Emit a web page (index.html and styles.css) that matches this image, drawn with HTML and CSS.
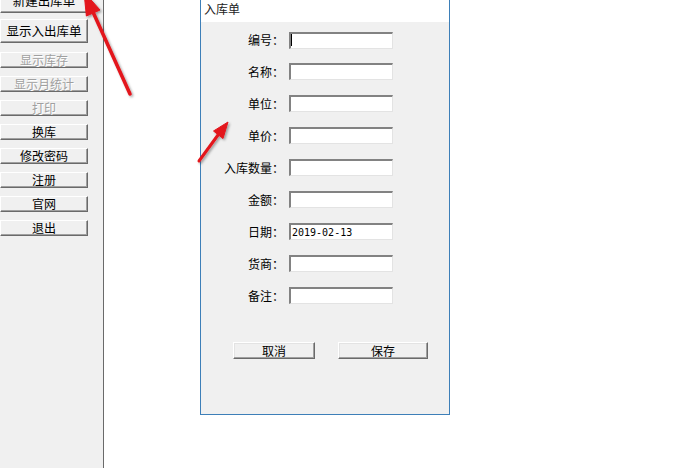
FILE: index.html
```html
<!DOCTYPE html>
<html lang="zh-CN">
<head>
    <meta charset="UTF-8">
    <title>入库单</title>
    <link rel="stylesheet" href="styles.css">
</head>
<body>
    <div class="page">
        <!-- 左侧菜单 -->
        <div class="sidebar">
            <button class="side-btn big first">新建出库单</button>
            <button class="side-btn big second">显示入出库单</button>
            <button class="side-btn" disabled>显示库存</button>
            <button class="side-btn" disabled>显示月统计</button>
            <button class="side-btn" disabled>打印</button>
            <button class="side-btn">换库</button>
            <button class="side-btn">修改密码</button>
            <button class="side-btn">注册</button>
            <button class="side-btn">官网</button>
            <button class="side-btn">退出</button>
        </div>

        <div class="main">
            <!-- 入库单窗口 -->
            <div class="dialog">
                <div class="dialog-title">入库单</div>
                <div class="dialog-body">
                    <div class="row">
                        <label class="row-label">编号：</label>
                        <span class="field-wrap">
                            <input class="field" type="text">
                            <span class="caret"></span>
                        </span>
                    </div>
                    <div class="row">
                        <label class="row-label">名称：</label>
                        <input class="field" type="text">
                    </div>
                    <div class="row">
                        <label class="row-label">单位：</label>
                        <input class="field" type="text">
                    </div>
                    <div class="row">
                        <label class="row-label">单价：</label>
                        <input class="field" type="text">
                    </div>
                    <div class="row">
                        <label class="row-label">入库数量：</label>
                        <input class="field" type="text">
                    </div>
                    <div class="row">
                        <label class="row-label">金额：</label>
                        <input class="field" type="text">
                    </div>
                    <div class="row">
                        <label class="row-label">日期：</label>
                        <input class="field date" type="text" value="2019-02-13">
                    </div>
                    <div class="row">
                        <label class="row-label">货商：</label>
                        <input class="field" type="text">
                    </div>
                    <div class="row">
                        <label class="row-label">备注：</label>
                        <input class="field" type="text">
                    </div>

                    <div class="actions">
                        <button class="act-btn cancel">取消</button>
                        <button class="act-btn save">保存</button>
                    </div>
                </div>
            </div>
        </div>

        <!-- 标注箭头 -->
        <svg class="arrows" width="688" height="468" viewBox="0 0 688 468">
            <defs>
                <filter id="shade" x="-20%" y="-20%" width="140%" height="140%">
                    <feDropShadow dx="1.5" dy="1.5" stdDeviation="1.2" flood-color="#000" flood-opacity="0.35"/>
                </filter>
            </defs>
            <g fill="#e3141b" stroke="#e3141b" filter="url(#shade)">
                <line x1="130" y1="94" x2="93" y2="12" stroke-width="3.5" stroke-linecap="round"/>
                <polygon points="84,-8 86.4,16 100,10" stroke-width="1" stroke-linejoin="round"/>
                <line x1="199" y1="161" x2="218" y2="135" stroke-width="3" stroke-linecap="round"/>
                <polygon points="228,122 213.5,131 223,138.5" stroke-width="1" stroke-linejoin="round"/>
            </g>
        </svg>
    </div>
</body>
</html>
```

FILE: styles.css
```css
body {
    margin: 0;
    padding: 0;
    background-color: #ffffff;
    font-family: "Noto Sans CJK SC", "Liberation Sans", sans-serif;
    font-size: 12px;
    color: #000;
}
.page {
    position: relative;
    display: flex;
    width: 688px;
    height: 468px;
    overflow: hidden;
}
.sidebar {
    width: 103px;
    flex-shrink: 0;
    background-color: #f0f0f0;
    border-right: 1px solid #6a6a6a;
    display: flex;
    flex-direction: column;
    gap: 8px;
}
.side-btn {
    width: 88px;
    height: 16px;
    padding: 0;
    margin: 0;
    background-color: #f0f0f0;
    border: 1px solid;
    border-color: #ffffff #6a6a6a #6a6a6a #ffffff;
    box-shadow: inset -1px -1px 0 #a0a0a0;
    font-family: "Noto Sans CJK SC", sans-serif;
    font-size: 12px;
    line-height: 14px;
    color: #000;
    text-align: center;
}
.side-btn.big {
    height: 24px;
    font-size: 12.5px;
}
.side-btn.first {
    margin-top: -11px;
    margin-bottom: -2px;
}
.side-btn.second {
    margin-bottom: 1px;
}
.side-btn:disabled {
    color: #a0a0a0;
    text-shadow: 1px 1px 0 #ffffff;
}
.main {
    flex: 1;
    padding-left: 96px;
}
.dialog {
    width: 248px;
    height: 414px;
    border: 1px solid #3d7fb8;
    border-top: none;
    background-color: #f0f0f0;
}
.dialog-title {
    height: 22px;
    background-color: #ffffff;
    padding-left: 3px;
    line-height: 18px;
    color: #222;
}
.dialog-body {
    padding-top: 9px;
    display: flex;
    flex-direction: column;
    gap: 15px;
}
.row {
    display: flex;
    align-items: center;
    height: 17px;
}
.row-label {
    width: 83px;
    text-align: right;
    margin-right: 5px;
    line-height: 17px;
}
.field-wrap {
    position: relative;
    display: block;
    height: 17px;
}
.field {
    box-sizing: border-box;
    width: 104px;
    height: 17px;
    margin: 0;
    padding: 0 0 0 1px;
    border-style: solid;
    border-width: 2px 1px 1px 2px;
    border-color: #828282 #e3e3e3 #e3e3e3 #828282;
    background-color: #ffffff;
    outline: none;
}
.field.date {
    font-family: "DejaVu Sans Mono", "Liberation Mono", monospace;
    font-size: 10px;
    color: #000;
}
.caret {
    position: absolute;
    left: 2px;
    top: 3px;
    width: 1px;
    height: 12px;
    background-color: #000;
}
.actions {
    display: flex;
    gap: 23px;
    margin-top: 23px;
    padding-left: 32px;
}
.act-btn {
    height: 17px;
    padding: 0;
    margin: 0;
    background-color: #f0f0f0;
    border: 1px solid;
    border-color: #ffffff #6a6a6a #6a6a6a #ffffff;
    box-shadow: inset -1px -1px 0 #a0a0a0, inset 1px 1px 0 #e3e3e3;
    font-family: "Noto Sans CJK SC", sans-serif;
    font-size: 12px;
    line-height: 14px;
    color: #000;
}
.act-btn.cancel {
    width: 82px;
}
.act-btn.save {
    width: 90px;
}
.arrows {
    position: absolute;
    left: 0;
    top: 0;
    pointer-events: none;
}
```
